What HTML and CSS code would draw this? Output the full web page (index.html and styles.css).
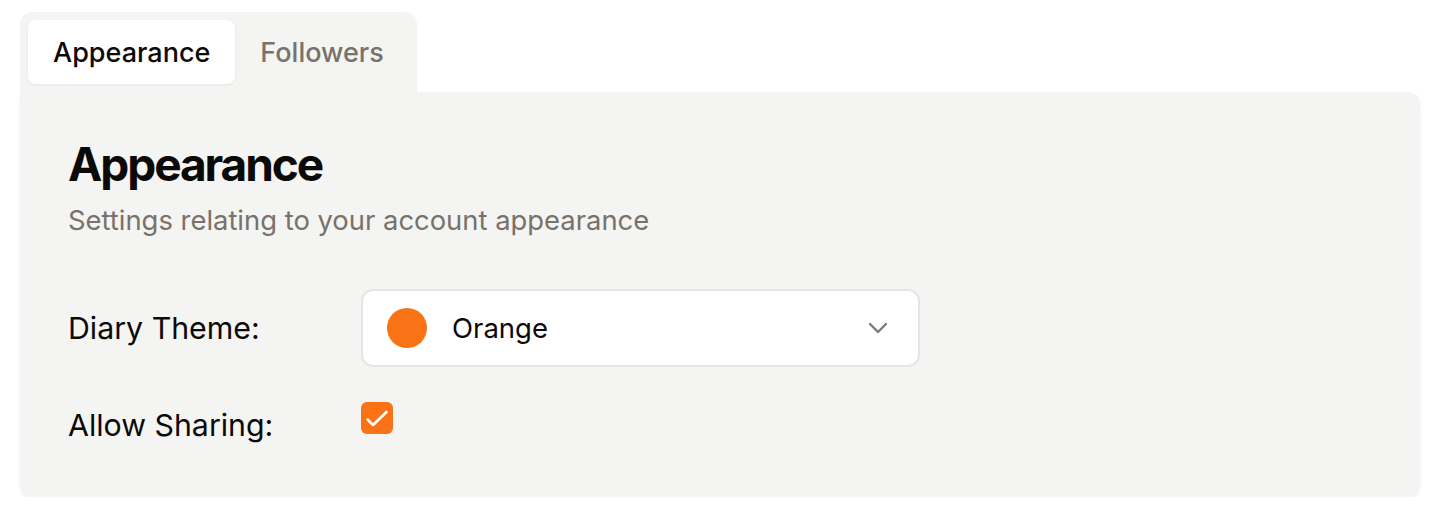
FILE: index.html
```html
<!DOCTYPE html>
<html lang="en">
<head>
<meta charset="utf-8">
<title>Settings</title>
<link rel="stylesheet" href="styles.css">
</head>
<body>
<div class="wrap">
  <div class="tabs">
    <button class="tab active">Appearance</button>
    <button class="tab">Followers</button>
  </div>
  <section class="panel">
    <h1 class="title">Appearance</h1>
    <p class="subtitle">Settings relating to your account appearance</p>
    <div class="form">
      <div class="row">
        <label class="label">Diary Theme:</label>
        <div class="select">
          <span class="dot"></span>
          <span class="value">Orange</span>
          <svg class="chev" width="20" height="12" viewBox="0 0 20 12"><path d="M2 2 L10 10 L18 2" fill="none" stroke="#7a7a7a" stroke-width="2.4" stroke-linecap="round" stroke-linejoin="round"/></svg>
        </div>
      </div>
      <div class="row row-check">
        <label class="label">Allow Sharing:</label>
        <span class="check">
          <svg width="32" height="32" viewBox="0 0 32 32"><path d="M6.5 17.5 L12 23 L25.5 10" fill="none" stroke="#fff" stroke-width="2.6" stroke-linecap="round" stroke-linejoin="round"/></svg>
        </span>
      </div>
    </div>
  </section>
</div>
</body>
</html>
```
FILE: styles.css
```css
* { box-sizing: border-box; }
html, body { margin: 0; background: #fff; }
body {
  font-family: Inter, "Noto Sans", sans-serif;
  color: #0c0a09;
  padding: 12px 26px 0 20px;
}
.wrap { display: flex; flex-direction: column; }
.tabs {
  align-self: flex-start;
  width: 397px;
  height: 80px;
  background: #f4f4f2;
  border-radius: 12px 12px 0 0;
  padding: 8px;
  display: flex;
}
.tab {
  font-family: inherit;
  border: 0;
  background: transparent;
  font-size: 27px;
  font-weight: 500;
  color: #78716c;
  height: 64px;
  padding: 0 25px;
  border-radius: 8px;
  cursor: pointer;
}
.tab.active {
  background: #fff;
  color: #0c0a09;
  box-shadow: 0 1px 3px rgba(0,0,0,0.06);
}
.panel {
  background: #f4f4f2;
  border-radius: 0 12px 12px 12px;
  padding: 44px 48px 0;
  box-shadow: 0 2px 4px rgba(0,0,0,0.05);
  height: 405px;
}
.title {
  margin: 0;
  font-size: 46px;
  font-weight: 700;
  letter-spacing: -0.045em;
  line-height: 56px;
}
.subtitle {
  margin: 10px 0 0;
  font-size: 27.4px;
  color: #78716c;
  line-height: 36px;
}
.form {
  margin-top: 51px;
  display: flex;
  flex-direction: column;
  gap: 35px;
}
.row { display: flex; align-items: center; }
.row-check { align-items: flex-start; }
.label {
  width: 293px;
  font-size: 30.3px;
  line-height: 40px;
}
.row-check .label { margin-top: 3px; }
.select {
  width: 559px;
  height: 78px;
  background: #fff;
  border: 2px solid #e5e5e3;
  border-radius: 12px;
  display: flex;
  align-items: center;
  padding: 0 30px 0 24px;
}
.dot {
  width: 40px; height: 40px; border-radius: 50%;
  background: #f97316;
  flex: none;
}
.value {
  margin-left: 25px;
  font-size: 27.5px;
  flex: 1;
}
.check {
  width: 32px; height: 32px;
  border-radius: 6px;
  background: #f97316;
  display: block;
}
.check svg { display: block; }
```
